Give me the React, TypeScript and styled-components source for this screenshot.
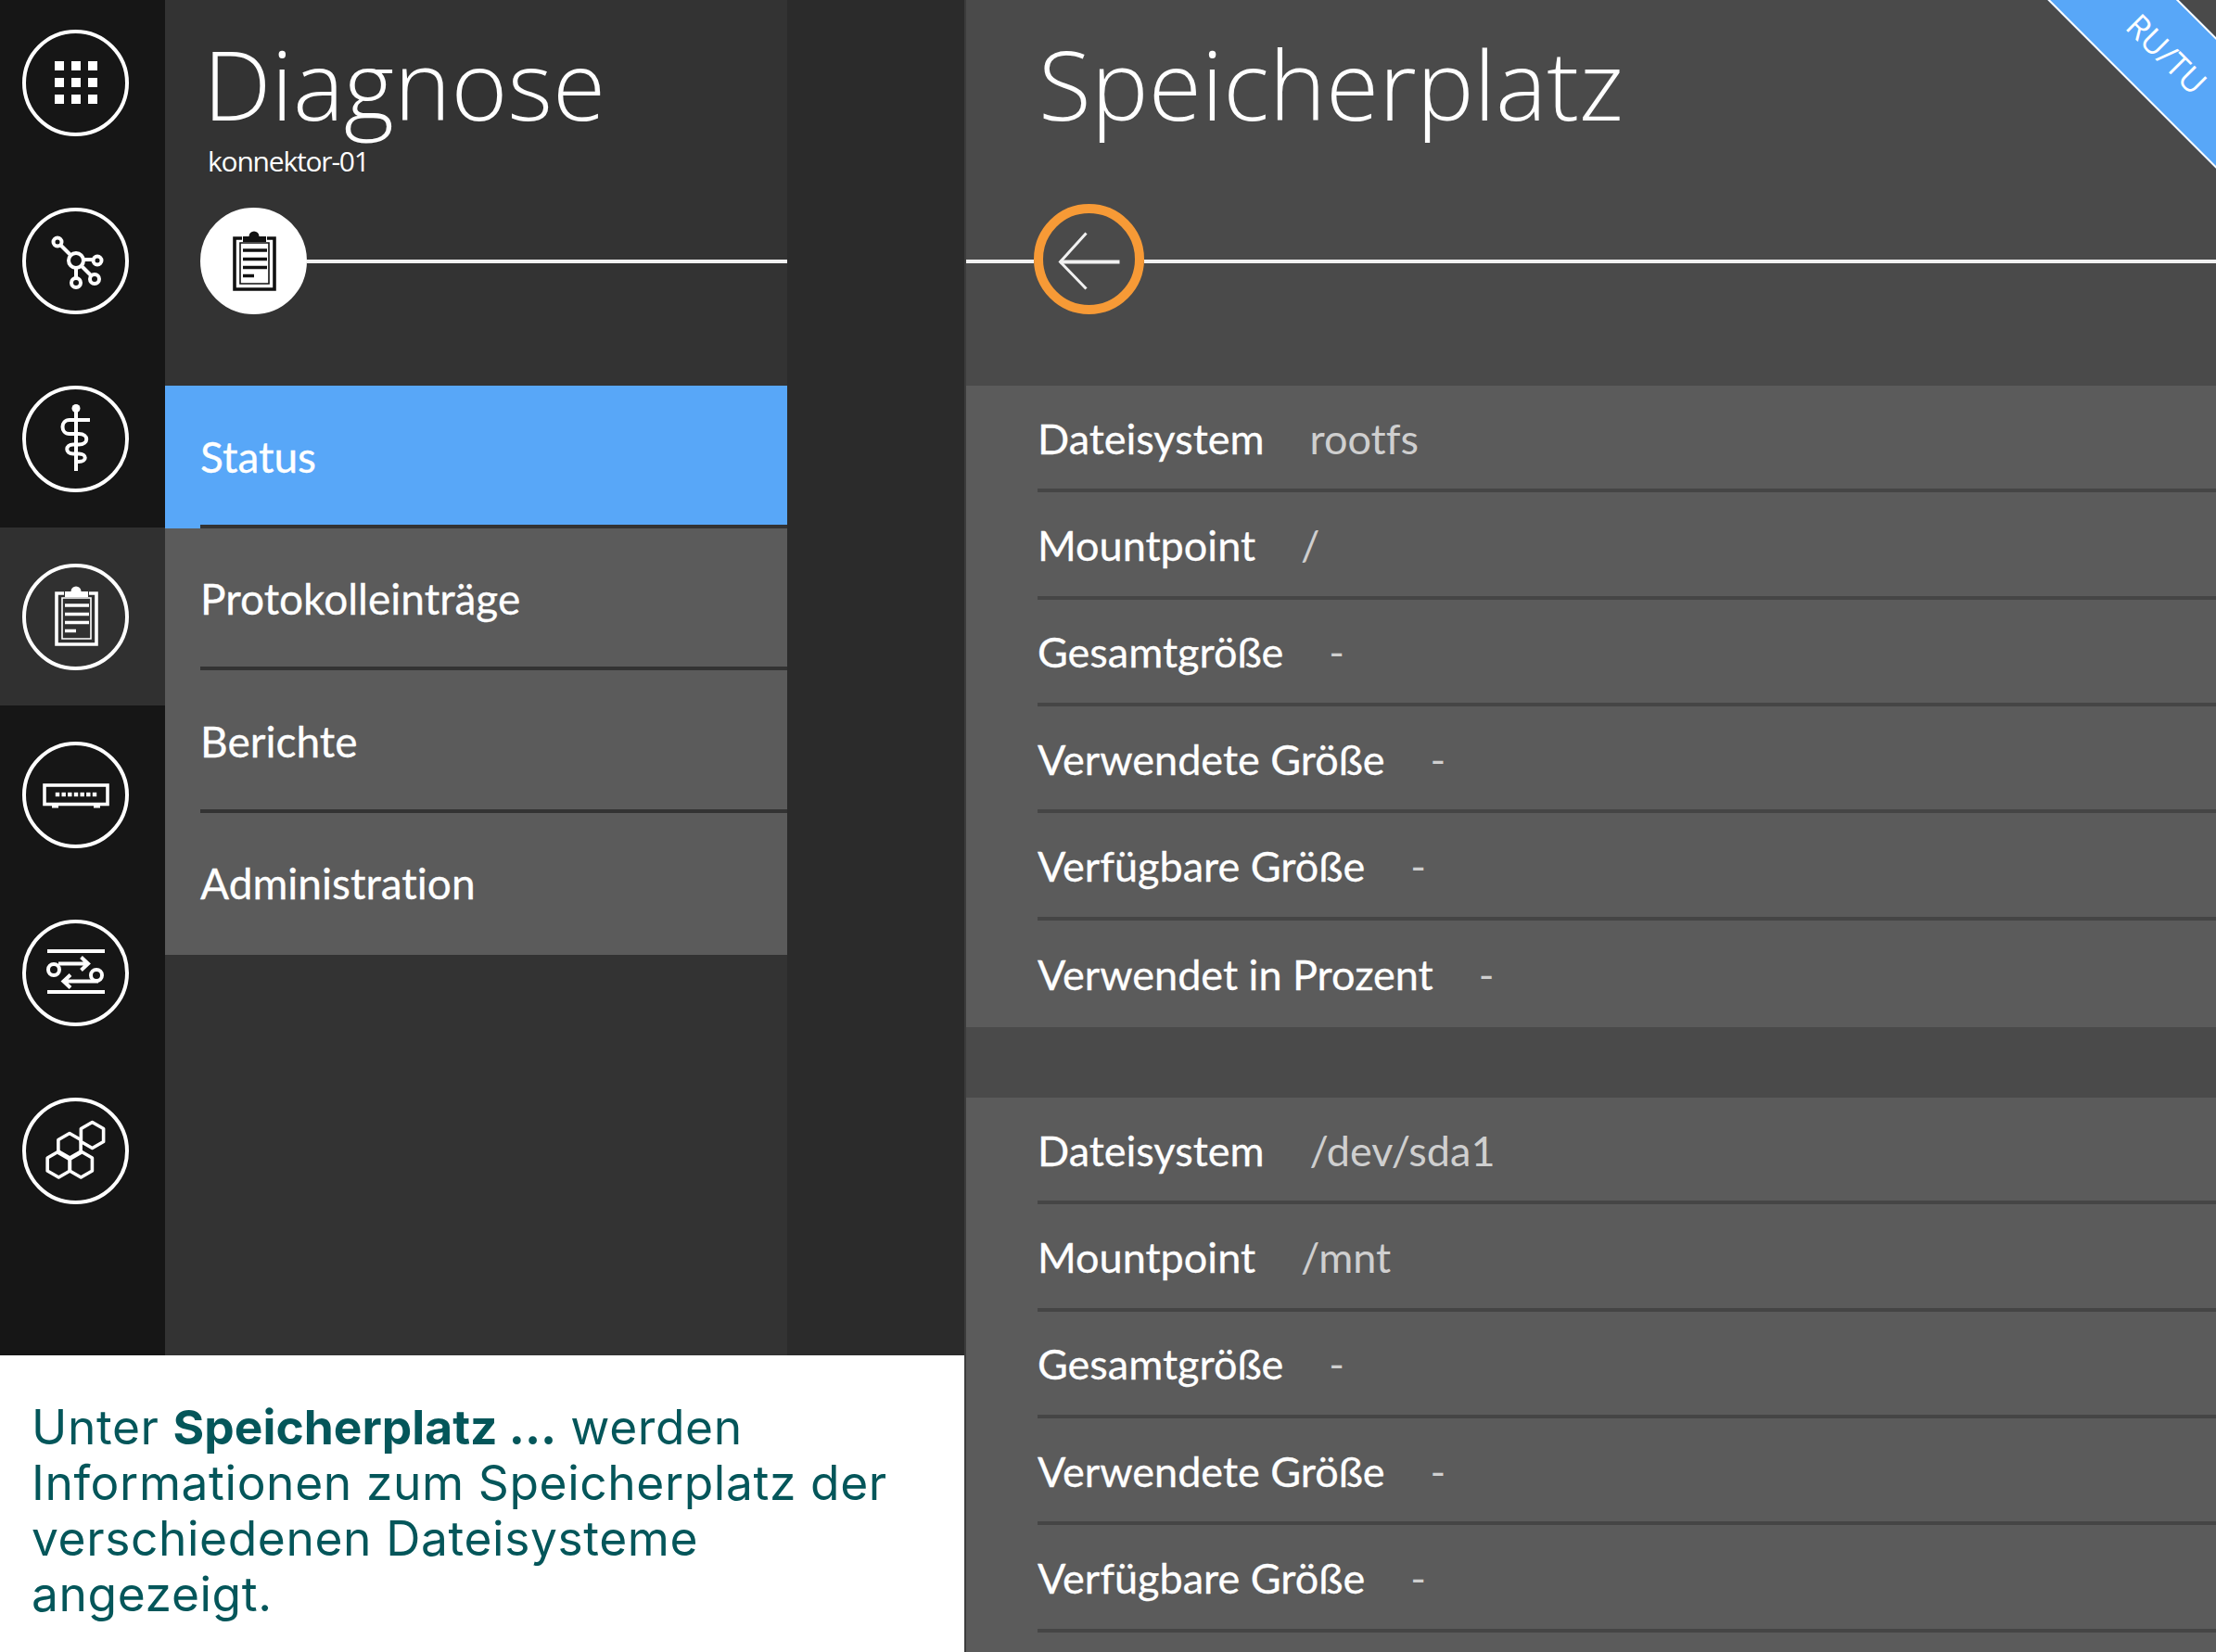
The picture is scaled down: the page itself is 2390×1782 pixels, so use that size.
import React from "react";
import styled, { createGlobalStyle } from "styled-components";

const Global = createGlobalStyle`
  html, body { margin: 0; padding: 0; background: #4a4a4a; }
  * { box-sizing: border-box; }
`;

const Shell = styled.div`
  display: flex;
  width: 2390px;
  height: 1782px;
  overflow: hidden;
`;
const LeftColumn = styled.div`
  display: flex;
  flex-direction: column;
  width: 1040px;
  flex: none;
`;
const Panels = styled.div`
  display: flex;
  height: 1462px;
  background: #2b2b2b;
  overflow: hidden;
`;
const Rail = styled.nav`
  width: 178px;
  flex: none;
  background: #161616;
`;
const RailList = styled.div`
  margin-top: -7px;
`;
const RailItem = styled.div<{ $active?: boolean }>`
  height: 192px;
  display: flex;
  align-items: center;
  padding-left: 24px;
  background: ${(p) => (p.$active ? "#303030" : "transparent")};
`;
const RoundIcon = styled.div<{ $solid?: boolean }>`
  width: 115px;
  height: 115px;
  flex: none;
  border-radius: 50%;
  border: 4px solid #fff;
  background: ${(p) => (p.$solid ? "#fff" : "transparent")};
  color: ${(p) => (p.$solid ? "#111" : "#fff")};
  display: flex;
  align-items: center;
  justify-content: center;
`;
const Sidebar = styled.aside`
  width: 671px;
  flex: none;
  background: #333;
  display: flex;
  flex-direction: column;
`;
const SidebarHead = styled.header`
  height: 416px;
  padding-top: 25px;
`;
const PageTitle = styled.h1<{ $left: number }>`
  margin: 0;
  padding-left: ${(p) => p.$left}px;
  font: 300 104px/130px "Open Sans", "Noto Sans", sans-serif;
  color: #fff;
  white-space: nowrap;
`;
const Subtitle = styled.div`
  margin: 1px 0 32px;
  padding-left: 46px;
  font: 500 30px/36px "Open Sans", sans-serif;
  letter-spacing: -1.2px;
  color: #fff;
`;
const StepRow = styled.div`
  display: flex;
  align-items: center;
  height: 115px;
  padding-left: 38px;
`;
const StepLine = styled.div`
  flex: 1;
  height: 4px;
  background: #f1f1f1;
`;
const Menu = styled.ul`
  margin: 0;
  padding: 0;
  list-style: none;
`;
const MenuItem = styled.li<{ $active?: boolean }>`
  height: 153.5px;
  padding-left: 38px;
  background: ${(p) => (p.$active ? "#58a7f8" : "#5b5b5b")};
`;
const MenuLabel = styled.div<{ $last?: boolean }>`
  height: 100%;
  display: flex;
  align-items: center;
  padding-top: 4px;
  font: 400 46px/60px Lato, sans-serif;
  font-variant-ligatures: none;
  -webkit-text-stroke: 0.3px #fff;
  color: #fff;
  border-bottom: 4px solid ${(p) => (p.$last ? "transparent" : "#333")};
`;
const Caption = styled.section`
  height: 320px;
  background: #fff;
  padding: 47px 0 0 34px;
  font: 400 51.5px/60px Inter, sans-serif;
  letter-spacing: 0.6px;
  color: #04565a;
  b {
    font-weight: 700;
    letter-spacing: 0;
  }
`;
const Main = styled.main`
  position: relative;
  flex: 1;
  display: flex;
  flex-direction: column;
  background: #4a4a4a;
  border-left: 2px solid #3c3c3c;
  overflow: hidden;
`;
const MainHead = styled.header`
  height: 416px;
  padding-top: 25px;
`;
const BackRow = styled.div`
  display: flex;
  align-items: center;
  height: 119px;
  margin-top: 65px;
`;
const BackLeadLine = styled.div`
  width: 73px;
  height: 4px;
  background: #f1f1f1;
  margin-top: 5px;
`;
const BackButton = styled.div`
  width: 119px;
  height: 119px;
  flex: none;
  border-radius: 50%;
  border: 10px solid #f79a36;
  display: flex;
  align-items: center;
  justify-content: center;
`;
const BackTrail = styled(StepLine)`
  margin-top: 5px;
`;
const Ribbon = styled.div`
  position: absolute;
  top: 8px;
  right: -147px;
  width: 400px;
  height: 100px;
  transform: rotate(45deg);
  background: #58a7f8;
  border-top: 2px solid #fff;
  border-bottom: 2px solid #fff;
  display: flex;
  align-items: center;
  justify-content: center;
  font: 400 35px/40px "Open Sans", sans-serif;
  color: #fff;
`;
const Group = styled.div<{ $fill?: boolean }>`
  background: #5b5b5b;
  padding-left: 77px;
  ${(p) => (p.$fill ? "flex: 1;" : "margin-bottom: 76px;")}
`;
const Row = styled.div<{ $last?: boolean }>`
  height: 115.33px;
  display: flex;
  align-items: center;
  gap: 49px;
  padding-top: 2px;
  font: 400 45px/60px Lato, sans-serif;
  font-variant-ligatures: none;
  border-bottom: ${(p) => (p.$last ? "none" : "4px solid #454545")};
`;
const RowLabel = styled.span`
  color: #fff;
  -webkit-text-stroke: 0.3px #fff;
`;
const RowValue = styled.span`
  color: #cfcfcf;
`;

const Grid = () => (
  <svg width="80" height="80" viewBox="-40 -40 80 80" fill="currentColor">
    {[-23, -5, 13].map((y) =>
      [-23, -5, 13].map((x) => <rect key={`${x}${y}`} x={x} y={y} width="10" height="10" />)
    )}
  </svg>
);
const Network = () => (
  <svg width="80" height="80" viewBox="-40 -40 80 80" fill="none" stroke="currentColor" strokeWidth="4">
    <path d="M-17 -17L-6 -6M8 -1H18M0 8V19M6 6L16 16" />
    <circle cx="0" cy="0" r="8" />
    <circle cx="-20" cy="-20" r="4.5" />
    <circle cx="23" cy="0" r="4.5" />
    <circle cx="0" cy="24" r="5" />
    <circle cx="20" cy="20" r="5" />
  </svg>
);
const Staff = () => (
  <svg width="80" height="80" viewBox="-40 -40 80 80" fill="none" stroke="currentColor" strokeWidth="4">
    <path d="M0 -32V35" />
    <circle cx="0" cy="-32.5" r="4.5" fill="currentColor" stroke="none" />
    <path d="M15 -20H-7C-17 -20 -17 -5 -7 -5H3C14 -5 14 6.5 3 6.5H-3C-12 6.5 -12 16.5 -3 16.5H3C12 16.5 12 25 3 25H0" />
  </svg>
);
const Clipboard = () => (
  <svg width="80" height="80" viewBox="-40 -40 80 80" fill="none" stroke="currentColor" strokeWidth="3.6">
    <path d="M-13 -25H-21V30H22V-25H14" />
    <path d="M-15 -20H16V24H-15Z" strokeWidth="1.6" />
    <path d="M-12 -27H13V-21H-12Z" fill="currentColor" stroke="none" />
    <circle cx="0" cy="-27" r="5.5" fill="currentColor" stroke="none" />
    <path d="M-12 -12H14M-12 -2.5H14M-12 6.5H14M-12 15.5H0" />
  </svg>
);
const Switch = () => (
  <svg width="80" height="80" viewBox="-40 -40 80 80" fill="none" stroke="currentColor" strokeWidth="3.6">
    <rect x="-34" y="-10" width="68" height="20.5" />
    <path d="M-26 12.5H-19M19 12.5H26" strokeWidth="4" />
    {[-20, -13.3, -6.7, 0, 6.7, 13.3, 20].map((x) => (
      <rect key={x} x={x - 2.2} y="-2.2" width="4.4" height="4.4" fill="currentColor" stroke="none" />
    ))}
  </svg>
);
const Exchange = () => (
  <svg width="80" height="80" viewBox="-40 -40 80 80" fill="none" stroke="currentColor" strokeWidth="4">
    <path d="M-31 -23H31M-31 21H31" />
    <circle cx="-24" cy="-3" r="6" />
    <circle cx="22" cy="3" r="6" />
    <path d="M-19 -9.5H12M5.5 -16.5L13 -9.5L5.5 -2.5" />
    <path d="M24 9.5H-13M-6 2.5L-13.5 9.5L-6 16.5" />
  </svg>
);
const Hexagon = ({ cx, cy }: { cx: number; cy: number }) => {
  const r = 14;
  const w = r * 0.866;
  return (
    <polygon
      points={`${cx},${cy - r} ${cx + w},${cy - r / 2} ${cx + w},${cy + r / 2} ${cx},${cy + r} ${cx - w},${cy + r / 2} ${cx - w},${cy - r / 2}`}
    />
  );
};
const Hexagons = () => (
  <svg width="80" height="80" viewBox="-40 -40 80 80" fill="none" stroke="currentColor" strokeWidth="3.6" strokeLinejoin="round">
    <Hexagon cx={17.5} cy={-16.5} />
    <Hexagon cx={-7} cy={-4.5} />
    <Hexagon cx={-18.7} cy={15} />
    <Hexagon cx={5.3} cy={15} />
  </svg>
);
const Back = () => (
  <svg width="99" height="99" viewBox="-49.5 -49.5 99 99" fill="none" stroke="#f1f1f1">
    <path d="M-3 -28L-31 3L-3 32" strokeWidth="3" />
    <path d="M-31 3H33" strokeWidth="4" />
  </svg>
);

const rail = [Grid, Network, Staff, Clipboard, Switch, Exchange, Hexagons];
const menu = ["Status", "Protokolleinträge", "Berichte", "Administration"];
const first: [string, string][] = [
  ["Dateisystem", "rootfs"],
  ["Mountpoint", "/"],
  ["Gesamtgröße", "-"],
  ["Verwendete Größe", "-"],
  ["Verfügbare Größe", "-"],
  ["Verwendet in Prozent", "-"],
];
const second: [string, string][] = [
  ["Dateisystem", "/dev/sda1"],
  ["Mountpoint", "/mnt"],
  ["Gesamtgröße", "-"],
  ["Verwendete Größe", "-"],
  ["Verfügbare Größe", "-"],
];

export default function App() {
  return (
    <Shell>
      <Global />
      <LeftColumn>
        <Panels>
          <Rail>
            <RailList>
              {rail.map((Icon, i) => (
                <RailItem key={i} $active={i === 3}>
                  <RoundIcon>
                    <Icon />
                  </RoundIcon>
                </RailItem>
              ))}
            </RailList>
          </Rail>
          <Sidebar>
            <SidebarHead>
              <PageTitle $left={41}>Diagnose</PageTitle>
              <Subtitle>konnektor-01</Subtitle>
              <StepRow>
                <RoundIcon $solid>
                  <Clipboard />
                </RoundIcon>
                <StepLine />
              </StepRow>
            </SidebarHead>
            <Menu>
              {menu.map((m, i) => (
                <MenuItem key={m} $active={i === 0}>
                  <MenuLabel $last={i === menu.length - 1}>{m}</MenuLabel>
                </MenuItem>
              ))}
            </Menu>
          </Sidebar>
        </Panels>
        <Caption>
          Unter <b>Speicherplatz ...</b> werden
          <br />
          Informationen zum Speicherplatz der
          <br />
          verschiedenen Dateisysteme
          <br />
          angezeigt.
        </Caption>
      </LeftColumn>
      <Main>
        <Ribbon>RU/TU</Ribbon>
        <MainHead>
          <PageTitle $left={78}>Speicherplatz</PageTitle>
          <BackRow>
            <BackLeadLine />
            <BackButton>
              <Back />
            </BackButton>
            <BackTrail />
          </BackRow>
        </MainHead>
        <Group>
          {first.map(([k, v], i) => (
            <Row key={k} $last={i === first.length - 1}>
              <RowLabel>{k}</RowLabel>
              <RowValue>{v}</RowValue>
            </Row>
          ))}
        </Group>
        <Group $fill>
          {second.map(([k, v]) => (
            <Row key={k}>
              <RowLabel>{k}</RowLabel>
              <RowValue>{v}</RowValue>
            </Row>
          ))}
        </Group>
      </Main>
    </Shell>
  );
}
